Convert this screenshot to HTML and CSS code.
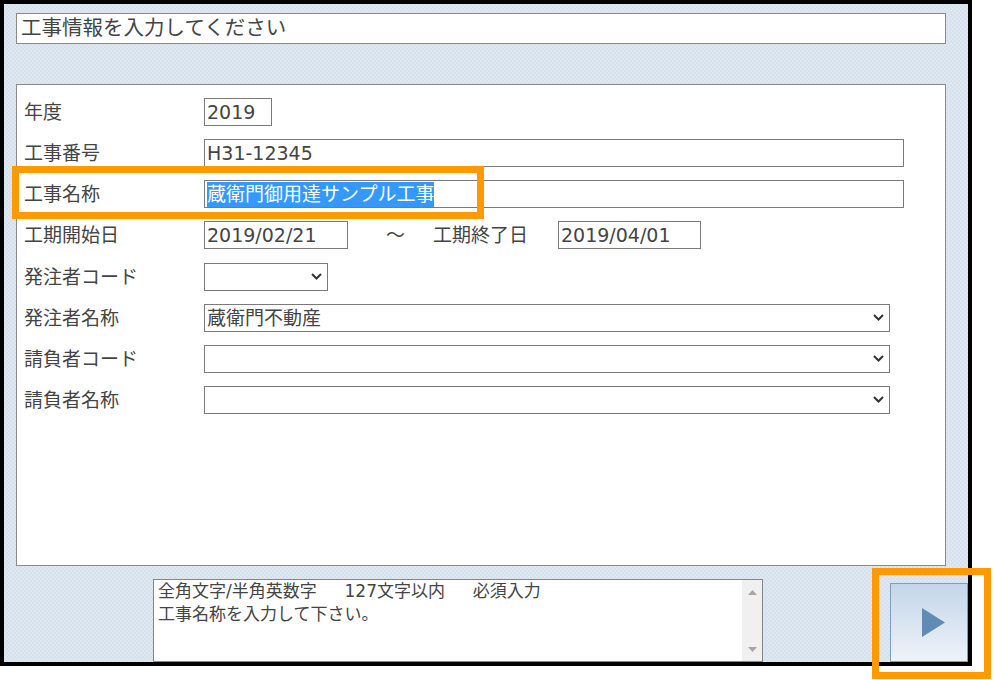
FILE: index.html
```html
<!DOCTYPE html>
<html lang="ja">
<head>
<meta charset="utf-8">
<title>工事情報</title>
<link rel="stylesheet" href="styles.css">
</head>
<body>
<div class="window">
  <div class="title">工事情報を入力してください</div>
  <div class="panel">
    <div class="row"><span class="label">年度</span><div class="field w-year">2019</div></div>
    <div class="row"><span class="label">工事番号</span><div class="field w-full">H31-12345</div></div>
    <div class="row"><span class="label">工事名称</span><div class="field w-full"><span class="sel">蔵衛門御用達サンプル工事</span></div></div>
    <div class="row"><span class="label">工期開始日</span><div class="field w-date">2019/02/21</div><span class="tilde">～</span><span class="label2">工期終了日</span><div class="field w-date2">2019/04/01</div></div>
    <div class="row"><span class="label">発注者コード</span><div class="field combo w-code"><span class="combo-text"></span><svg class="chev" width="11" height="7" viewBox="0 0 11 7"><polyline points="1,1 5.5,5.5 10,1" fill="none" stroke="#333" stroke-width="2"/></svg></div></div>
    <div class="row"><span class="label">発注者名称</span><div class="field combo w-combo"><span class="combo-text">蔵衛門不動産</span><svg class="chev" width="11" height="7" viewBox="0 0 11 7"><polyline points="1,1 5.5,5.5 10,1" fill="none" stroke="#333" stroke-width="2"/></svg></div></div>
    <div class="row"><span class="label">請負者コード</span><div class="field combo w-combo"><span class="combo-text"></span><svg class="chev" width="11" height="7" viewBox="0 0 11 7"><polyline points="1,1 5.5,5.5 10,1" fill="none" stroke="#333" stroke-width="2"/></svg></div></div>
    <div class="row"><span class="label">請負者名称</span><div class="field combo w-combo"><span class="combo-text"></span><svg class="chev" width="11" height="7" viewBox="0 0 11 7"><polyline points="1,1 5.5,5.5 10,1" fill="none" stroke="#333" stroke-width="2"/></svg></div></div>
  </div>
  <div class="bottom">
    <div class="help">
      <div class="help-text">
        <div class="help-line">全角文字/半角英数字　  127文字以内　  必須入力</div>
        <div class="help-line">工事名称を入力して下さい。</div>
      </div>
      <div class="scrollbar">
        <svg width="9" height="5" viewBox="0 0 9 5"><polygon points="0,5 4.5,0 9,5" fill="#a6a6a6"/></svg>
        <svg width="9" height="5" viewBox="0 0 9 5"><polygon points="0,0 9,0 4.5,5" fill="#a6a6a6"/></svg>
      </div>
    </div>
    <div class="next-btn"><svg width="23" height="29" viewBox="0 0 23 29"><polygon points="0,0 23,14.5 0,29" fill="#5f8bb4"/></svg></div>
  </div>
</div>
<div class="mark mark-name"></div>
<div class="mark mark-next"></div>
</body>
</html>
```
FILE: styles.css
```css
html, body {
  margin: 0;
  background: #fff;
}
body {
  position: relative;
  width: 995px;
  height: 680px;
  overflow: hidden;
  font-family: "DejaVu Sans", "Noto Sans CJK JP", sans-serif;
  color: #444;
}
.window {
  box-sizing: border-box;
  width: 972px;
  height: 666px;
  border: 4px solid #000;
  background-color: #dae5ef;
  background-image: repeating-conic-gradient(#d6e1ec 0 25%, #dee8f1 0 50%);
  background-size: 4px 4px;
  padding: 9px 0 0 12px;
  display: flex;
  flex-direction: column;
}
.title {
  box-sizing: border-box;
  flex: none;
  width: 930px;
  height: 31px;
  border: 1px solid #8a8a8a;
  background: #fff;
  font-size: 20.5px;
  line-height: 29px;
  padding-left: 4px;
}
.panel {
  box-sizing: border-box;
  flex: none;
  width: 930px;
  height: 482px;
  margin-top: 40px;
  border: 1px solid #8a8a8a;
  background: #fff;
  padding: 13px 0 0 7px;
  display: flex;
  flex-direction: column;
  gap: 13.15px;
}
.row {
  display: flex;
  align-items: center;
  height: 28px;
  font-size: 19px;
}
.label {
  flex: none;
  width: 180px;
  line-height: 28px;
}
.field {
  box-sizing: border-box;
  flex: none;
  height: 28px;
  border: 1px solid #7a7a7a;
  line-height: 26px;
  padding-left: 2px;
  white-space: nowrap;
  overflow: hidden;
  background: #fff;
}
.w-year { width: 68px; }
.w-full { width: 700px; }
.w-date { width: 144px; }
.w-date2 { width: 143px; }
.w-code { width: 124px; }
.w-combo { width: 686px; }
.tilde {
  box-sizing: border-box;
  flex: none;
  width: 85px;
  padding-left: 38px;
  line-height: 28px;
}
.label2 {
  flex: none;
  width: 125px;
  line-height: 28px;
}
.combo {
  display: flex;
  align-items: center;
  justify-content: space-between;
  padding-right: 5px;
}
.chev {
  flex: none;
}
.sel {
  display: inline-block;
  vertical-align: top;
  margin-top: 1px;
  height: 25px;
  line-height: 25px;
  background: #3399ff;
  color: #fff;
}
.bottom {
  flex: 1;
  display: flex;
  align-items: flex-end;
}
.help {
  box-sizing: border-box;
  flex: none;
  width: 610px;
  height: 83px;
  margin-left: 137px;
  border: 1px solid #858585;
  background: #fff;
  display: flex;
}
.help-text {
  flex: 1;
  font-size: 17px;
  line-height: 23px;
  padding-left: 4px;
}
.help-line {
  white-space: pre;
}
.scrollbar {
  box-sizing: border-box;
  flex: none;
  width: 20px;
  background: #f0f0f0;
  display: flex;
  flex-direction: column;
  justify-content: space-between;
  align-items: center;
  padding: 10px 0 9px;
}
.next-btn {
  box-sizing: border-box;
  flex: none;
  width: 78px;
  height: 79px;
  margin-left: auto;
  border: 1px solid #7c9ec0;
  background: linear-gradient(#c3d6e8, #eef3fa);
  padding: 24px 0 0 31px;
}
.next-btn svg {
  display: block;
}
.mark {
  position: absolute;
  box-sizing: border-box;
  border: 7px solid #ff9900;
}
.mark-name {
  left: 12px;
  top: 166px;
  width: 472px;
  height: 53px;
}
.mark-next {
  left: 872px;
  top: 568px;
  width: 119px;
  height: 111px;
}
```
